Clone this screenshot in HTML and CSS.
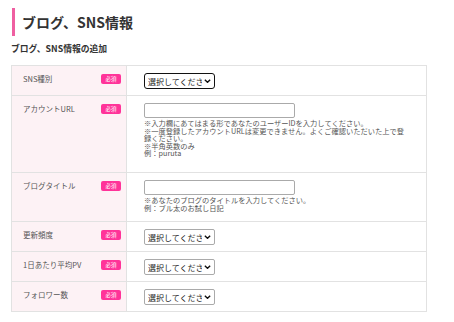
FILE: index.html
```html
<!DOCTYPE html>
<html lang="ja">
<head>
    <meta charset="UTF-8">
    <title>ブログ、SNS情報</title>
    <link rel="stylesheet" href="styles.css">
</head>
<body>
    <div class="page">
        <h1 class="title">ブログ、SNS情報</h1>
        <h2 class="subtitle">ブログ、SNS情報の追加</h2>

        <table class="form-table">
            <tr>
                <th><div class="label"><span>SNS種別</span><span class="req">必須</span></div></th>
                <td>
                    <div class="select-wrap focused">
                        <select><option>選択してください</option></select>
                        <svg class="chev" viewBox="0 0 10 6"><path d="M1 1l4 4 4-4" fill="none" stroke="#111" stroke-width="2"/></svg>
                    </div>
                </td>
            </tr>
            <tr>
                <th><div class="label"><span>アカウントURL</span><span class="req">必須</span></div></th>
                <td>
                    <input type="text" class="text-input">
                    <p class="note note-long">※入力欄にあてはまる形であなたのユーザーIDを入力してください。<br>※一度登録したアカウントURLは変更できません。よくご確認いただいた上で登録ください。<br>※半角英数のみ<br>例：puruta</p>
                </td>
            </tr>
            <tr>
                <th><div class="label"><span>ブログタイトル</span><span class="req">必須</span></div></th>
                <td>
                    <input type="text" class="text-input">
                    <p class="note">※あなたのブログのタイトルを入力してください。<br>例：プル太のお試し日記</p>
                </td>
            </tr>
            <tr>
                <th><div class="label"><span>更新頻度</span><span class="req">必須</span></div></th>
                <td>
                    <div class="select-wrap">
                        <select><option>選択してください</option></select>
                        <svg class="chev" viewBox="0 0 10 6"><path d="M1 1l4 4 4-4" fill="none" stroke="#111" stroke-width="2"/></svg>
                    </div>
                </td>
            </tr>
            <tr>
                <th><div class="label"><span>1日あたり平均PV</span><span class="req">必須</span></div></th>
                <td>
                    <div class="select-wrap">
                        <select><option>選択してください</option></select>
                        <svg class="chev" viewBox="0 0 10 6"><path d="M1 1l4 4 4-4" fill="none" stroke="#111" stroke-width="2"/></svg>
                    </div>
                </td>
            </tr>
            <tr>
                <th><div class="label"><span>フォロワー数</span><span class="req">必須</span></div></th>
                <td>
                    <div class="select-wrap">
                        <select><option>選択してください</option></select>
                        <svg class="chev" viewBox="0 0 10 6"><path d="M1 1l4 4 4-4" fill="none" stroke="#111" stroke-width="2"/></svg>
                    </div>
                </td>
            </tr>
        </table>
    </div>
</body>
</html>
```

FILE: styles.css
```css
body {
    margin: 0;
    background: #fff;
    color: #333;
    font-family: "Noto Sans CJK JP", "Noto Sans", sans-serif;
}

.page {
    padding: 8px 28px 0 11px;
}

.title {
    margin: 0 0 0 1px;
    padding-left: 7px;
    border-left: 3px solid #ef5fa1;
    font-size: 14px;
    line-height: 28px;
    font-weight: bold;
    color: #333;
}

.subtitle {
    margin: 7px 0 10px;
    font-size: 8.8px;
    line-height: 12px;
    font-weight: bold;
    color: #333;
}

.form-table {
    width: 416px;
    table-layout: fixed;
    border-collapse: collapse;
    border: 1px solid #e2e2e2;
}

.form-table th,
.form-table td {
    border: 1px solid #e2e2e2;
    vertical-align: top;
    text-align: left;
}

.form-table th {
    width: 98px;
    padding: 8px 5px 0 11px;
    background: #fdf2f5;
    font-weight: normal;
}

.label {
    display: flex;
    justify-content: space-between;
    align-items: flex-start;
    font-size: 7.5px;
    line-height: 10px;
    color: #555;
}

.form-table td {
    padding: 7px 18px 6px 17px;
}

.req {
    width: 20px;
    height: 10px;
    border-radius: 2px;
    background: #ff3399;
    color: #fff;
    font-size: 5.5px;
    line-height: 10px;
    text-align: center;
}

.select-wrap {
    position: relative;
    width: 71px;
    height: 16px;
}

.select-wrap select {
    appearance: none;
    -webkit-appearance: none;
    display: block;
    box-sizing: border-box;
    width: 71px;
    height: 16px;
    margin: 0;
    padding: 0 12px 0 3px;
    border: 1px solid #aaa;
    border-radius: 2px;
    background: #fff;
    font-family: "Noto Sans CJK JP", sans-serif;
    font-size: 8px;
    color: #222;
}

.select-wrap.focused select {
    border: 1.5px solid #111;
    border-radius: 3px;
}

.chev {
    position: absolute;
    right: 4px;
    top: 6px;
    width: 7px;
    height: 4px;
}

.text-input {
    display: block;
    box-sizing: border-box;
    width: 151px;
    height: 15px;
    margin: 0 0 2px;
    border: 1px solid #aaa;
    border-radius: 2px;
}

.note {
    margin: 0 0 3px;
    font-size: 7.25px;
    line-height: 7.6px;
    color: #555;
}

.note-long {
    margin-bottom: 8px;
}
```
